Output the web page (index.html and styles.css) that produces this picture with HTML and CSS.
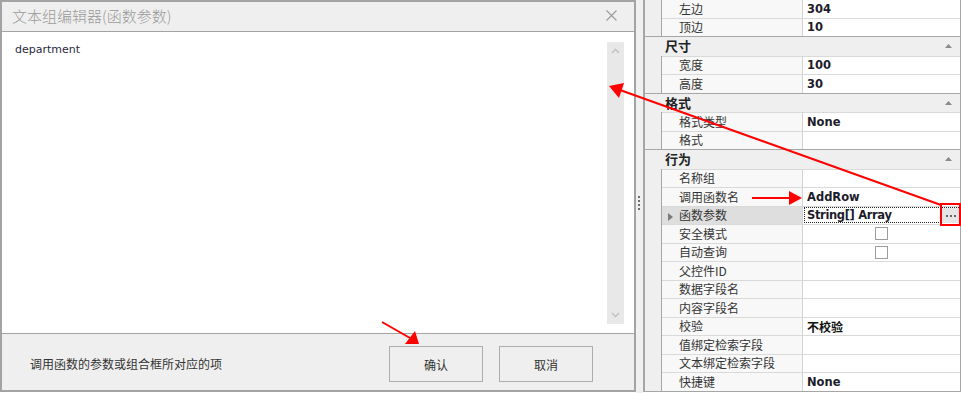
FILE: index.html
```html
<!DOCTYPE html>
<html lang="zh-CN">
<head>
<meta charset="utf-8">
<title>文本组编辑器</title>
<link rel="stylesheet" href="styles.css">
</head>
<body>
<div class="screen">
  <div class="dialog">
    <div class="titlebar">
      <span class="title">文本组编辑器(函数参数)</span>
      <svg class="close" width="11" height="11" viewBox="0 0 11 11"><path d="M0.5 0.5 L10.5 10.5 M10.5 0.5 L0.5 10.5" stroke="#9a9a9a" stroke-width="1.1" fill="none"/></svg>
    </div>
    <div class="content">
      <div class="editor">department</div>
      <div class="scrollbar">
        <svg width="9" height="6" viewBox="0 0 9 6"><path d="M1 5 L4.5 1.5 L8 5" stroke="#c3c3c3" stroke-width="1.6" fill="none"/></svg>
        <svg width="9" height="6" viewBox="0 0 9 6"><path d="M1 1 L4.5 4.5 L8 1" stroke="#c3c3c3" stroke-width="1.6" fill="none"/></svg>
      </div>
    </div>
    <div class="footer">
      <span class="hint">调用函数的参数或组合框所对应的项</span>
      <div class="buttons">
        <button class="btn">确认</button>
        <button class="btn">取消</button>
      </div>
    </div>
  </div>

  <div class="splitter"><span class="grip"><i></i><i></i><i></i><i></i></span></div>

  <div class="grid">
    <div class="row"><span class="gut"></span><span class="name">左边</span><span class="val">304</span></div>
    <div class="row"><span class="gut"></span><span class="name">顶边</span><span class="val">10</span></div>
    <div class="cat"><span>尺寸</span><svg width="7" height="4" viewBox="0 0 7 4"><path d="M0 4 L3.5 0 L7 4 Z" fill="#8a8a8a"/></svg></div>
    <div class="row"><span class="gut"></span><span class="name">宽度</span><span class="val">100</span></div>
    <div class="row"><span class="gut"></span><span class="name">高度</span><span class="val">30</span></div>
    <div class="cat"><span>格式</span><svg width="7" height="4" viewBox="0 0 7 4"><path d="M0 4 L3.5 0 L7 4 Z" fill="#8a8a8a"/></svg></div>
    <div class="row"><span class="gut"></span><span class="name">格式类型</span><span class="val">None</span></div>
    <div class="row"><span class="gut"></span><span class="name">格式</span><span class="val"></span></div>
    <div class="cat"><span>行为</span><svg width="7" height="4" viewBox="0 0 7 4"><path d="M0 4 L3.5 0 L7 4 Z" fill="#8a8a8a"/></svg></div>
    <div class="row"><span class="gut"></span><span class="name">名称组</span><span class="val"></span></div>
    <div class="row"><span class="gut"></span><span class="name">调用函数名</span><span class="val">AddRow</span></div>
    <div class="row sel"><span class="gut"></span><span class="name"><svg class="mark" width="5" height="8" viewBox="0 0 5 8"><path d="M0 0 L5 4 L0 8 Z" fill="#7a7a7a"/></svg>函数参数</span><span class="val focus"><span class="narrow">String[] Array</span><span class="dots"><i></i><i></i><i></i></span></span></div>
    <div class="row"><span class="gut"></span><span class="name">安全模式</span><span class="val center"><span class="check"></span></span></div>
    <div class="row"><span class="gut"></span><span class="name">自动查询</span><span class="val center"><span class="check"></span></span></div>
    <div class="row"><span class="gut"></span><span class="name">父控件ID</span><span class="val"></span></div>
    <div class="row"><span class="gut"></span><span class="name">数据字段名</span><span class="val"></span></div>
    <div class="row"><span class="gut"></span><span class="name">内容字段名</span><span class="val"></span></div>
    <div class="row"><span class="gut"></span><span class="name">校验</span><span class="val cjk">不校验</span></div>
    <div class="row"><span class="gut"></span><span class="name">值绑定检索字段</span><span class="val"></span></div>
    <div class="row"><span class="gut"></span><span class="name">文本绑定检索字段</span><span class="val"></span></div>
    <div class="row"><span class="gut"></span><span class="name">快捷键</span><span class="val">None</span></div>
  </div>

  <svg class="annot" width="961" height="393" viewBox="0 0 961 393">
    <g stroke="#ff0000" stroke-width="2" fill="none">
      <line x1="941" y1="205" x2="620" y2="90"/>
      <line x1="752" y1="198" x2="790" y2="198"/>
      <line x1="382" y1="322" x2="410" y2="338"/>
      <rect x="941" y="204" width="19" height="21"/>
    </g>
    <g fill="#ff0000">
      <polygon points="609,86 624,83 619,98"/>
      <polygon points="802,198 789,191 789,205"/>
      <polygon points="419,344 405,344 415,331"/>
    </g>
  </svg>
</div>
</body>
</html>
```

FILE: styles.css
```css
* { box-sizing: border-box; margin: 0; padding: 0; }

html, body {
  width: 961px;
  height: 393px;
  overflow: hidden;
  background: #ffffff;
}

body {
  font-family: "Noto Sans CJK SC", "DejaVu Sans", sans-serif;
  color: #333333;
}

.screen {
  position: relative;
  display: flex;
  align-items: flex-start;
  width: 961px;
  height: 393px;
}

/* ---------- dialog ---------- */
.dialog {
  width: 636px;
  height: 392px;
  border: 2px solid #a3a3a3;
  background: #efefef;
  display: flex;
  flex-direction: column;
  flex: none;
}

.titlebar {
  height: 30px;
  border-bottom: 1px solid #a3a3a3;
  display: flex;
  align-items: center;
  justify-content: space-between;
  padding: 0 17px 2px 10px;
}

.title {
  font-size: 15px;
  line-height: 18px;
  font-weight: 300;
  color: #9a9a9a;
}

.close { display: block; }

.content {
  height: 302px;
  background: #ffffff;
  border-bottom: 1px solid #a3a3a3;
  display: flex;
  padding: 11px 10px 9px 13px;
}

.editor {
  flex: 1;
  font-family: "DejaVu Sans", sans-serif;
  font-size: 11px;
  line-height: 13px;
  color: #2a2a40;
}

.scrollbar {
  width: 17px;
  margin-top: -1px;
  background: #e8e8e8;
  display: flex;
  flex-direction: column;
  align-items: center;
  justify-content: space-between;
  padding: 6px 0 6px;
}

.footer {
  flex: 1;
  display: flex;
  align-items: flex-start;
  padding: 12px 41px 0 28px;
}

.hint {
  font-size: 12px;
  line-height: 36px;
  color: #333333;
}

.buttons {
  margin-left: auto;
  display: flex;
  gap: 16px;
}

.btn {
  width: 94px;
  height: 36px;
  border: 1px solid #adadad;
  background: #efefef;
  font-family: "Noto Sans CJK SC", sans-serif;
  font-size: 12px;
  color: #333333;
}

/* ---------- splitter ---------- */
.splitter {
  width: 7px;
  height: 393px;
  background: #f0f0f0;
  flex: none;
  display: flex;
  flex-direction: column;
  padding: 196px 0 0 2px;
}

.grip {
  display: flex;
  flex-direction: column;
  gap: 2px;
}

.grip i {
  display: block;
  width: 2px;
  height: 2px;
  background: #6f6f6f;
}

/* ---------- property grid ---------- */
.grid {
  width: 318px;
  margin-top: -1px;
  border-left: 2px solid #a6a6a6;
  border-right: 1px solid #a6a6a6;
  border-bottom: 1px solid #a6a6a6;
  display: flex;
  flex-direction: column;
  flex: none;
  background: #ffffff;
}

.row {
  display: flex;
  height: 18.5px;
}

.gut {
  width: 17px;
  flex: none;
  background: #efefef;
  border-right: 1px solid #a6a6a6;
}

.name,
.val {
  border-top: 1px solid #d9d9d9;
  display: flex;
  align-items: center;
  white-space: nowrap;
}

.name {
  width: 141px;
  flex: none;
  padding-left: 17px;
  background: #f8f8f8;
  border-right: 1px solid #d2d2d2;
  font-size: 12px;
  line-height: 14px;
  color: #353535;
  position: relative;
}

.val {
  flex: 1;
  padding-left: 4px;
  font-family: "DejaVu Sans", sans-serif;
  font-weight: bold;
  font-size: 11.5px;
  color: #1c1c2a;
  position: relative;
}

.narrow { letter-spacing: -0.35px; }

.val.cjk {
  font-family: "Noto Sans CJK SC", sans-serif;
  font-size: 12px;
  color: #111111;
}

.val.center { justify-content: center; padding-left: 0; }

.check {
  width: 13px;
  height: 13px;
  border: 1px solid #9c9c9c;
  background: #ffffff;
}

.sel .name { background: #dedede; }

.mark {
  position: absolute;
  left: 6px;
  top: 6px;
}

.val.focus {
  outline: 1px dotted #222222;
  outline-offset: -2px;
}

.dots {
  position: absolute;
  right: 1px;
  top: 1px;
  bottom: 1px;
  width: 17px;
  background: #e6e6e6;
  display: flex;
  align-items: center;
  justify-content: center;
  gap: 2px;
  padding-top: 2px;
}

.dots i {
  display: block;
  width: 2px;
  height: 2px;
  background: #666666;
}

.cat {
  height: 19.5px;
  display: flex;
  align-items: center;
  justify-content: space-between;
  background: #efefef;
  border-top: 1px solid #a6a6a6;
  padding: 0 8px 0 20px;
  font-size: 13px;
  font-weight: bold;
  color: #222222;
  line-height: 16px;
}

/* ---------- annotations ---------- */
.annot {
  position: absolute;
  left: 0;
  top: 0;
  pointer-events: none;
}
```
